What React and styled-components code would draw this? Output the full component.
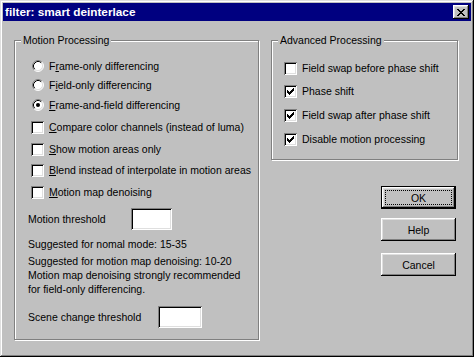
import React from 'react'
import styled, { createGlobalStyle, css } from 'styled-components'

const GlobalStyle = createGlobalStyle`
  html, body {
    margin: 0;
    background: #c0c0c0;
  }
  body {
    font-family: "Liberation Sans", Arial, sans-serif;
    font-size: 10.5px;
    color: #000;
  }
`

const raised = css`
  box-shadow: inset -1px -1px #000, inset 1px 1px #fff, inset -2px -2px #808080, inset 2px 2px #dfdfdf;
`

const sunken = css`
  box-shadow: inset 1px 1px #808080, inset -1px -1px #fff, inset 2px 2px #000, inset -2px -2px #dfdfdf;
`

const Window = styled.div`
  width: 474px;
  height: 357px;
  box-sizing: border-box;
  padding: 3px;
  background: #c0c0c0;
  box-shadow: inset -1px -1px #000, inset 1px 1px #dfdfdf, inset -2px -2px #808080, inset 2px 2px #fff;
  display: flex;
  flex-direction: column;
`

const TitleBar = styled.div`
  height: 18px;
  background: #000080;
  display: flex;
  align-items: center;
  justify-content: space-between;
  padding: 0 2px;
`

const Title = styled.span`
  color: #fff;
  font-weight: bold;
  font-size: 11.8px;
  line-height: 14px;
`

const CloseButton = styled.button`
  width: 16px;
  height: 14px;
  padding: 0 0 0 0;
  border: 0;
  background: #c0c0c0;
  ${raised}
  display: flex;
  align-items: center;
  justify-content: center;
`

const Body = styled.div`
  display: flex;
  gap: 12px;
  padding: 19px 0 0 11px;
`

const Group = styled.div`
  position: relative;
  box-sizing: border-box;
  width: ${p => p.$w}px;
  height: ${p => p.$h}px;
  border: 1px solid #808080;
  box-shadow: 1px 1px 0 #fff, inset 1px 1px 0 #fff;
  padding-left: ${p => p.$pl}px;
  display: flex;
  flex-direction: column;
`

const Legend = styled.span`
  position: absolute;
  top: -7px;
  left: 6px;
  padding: 0 2px;
  background: #c0c0c0;
  line-height: 13px;
  white-space: nowrap;
`

const Option = styled.label`
  display: flex;
  align-items: center;
  gap: 5px;
  height: ${p => p.$h || 13}px;
  margin-top: ${p => p.$mt}px;
  margin-left: ${p => p.$ml || 0}px;
  line-height: 13px;
  white-space: nowrap;
`

const Box = styled.span`
  position: relative;
  width: 13px;
  height: 13px;
  flex: none;
  background: #fff;
  ${sunken}
  svg {
    position: absolute;
    left: 3px;
    top: 3px;
  }
`

const RadioSlot = styled.span`
  width: 13px;
  height: 12px;
  flex: none;
  display: flex;
  justify-content: flex-end;
`

const Field = styled.div`
  display: flex;
  align-items: center;
  height: 22px;
  margin-top: ${p => p.$mt}px;
  white-space: nowrap;
`

const FieldLabel = styled.span`
  width: ${p => p.$w}px;
  flex: none;
`

const TextBox = styled.input`
  width: ${p => p.$w}px;
  height: 22px;
  box-sizing: border-box;
  border: 0;
  padding: 0 3px;
  margin: 0;
  outline: none;
  background: #fff;
  font: inherit;
  ${sunken}
`

const Note = styled.p`
  margin: ${p => p.$mt}px 0 0;
  line-height: ${p => p.$lh || 13}px;
  white-space: nowrap;
`

const Side = styled.div`
  width: 187px;
  display: flex;
  flex-direction: column;
`

const ButtonStack = styled.div`
  display: flex;
  flex-direction: column;
  align-items: flex-end;
  margin-right: 2px;
`

const Button = styled.button`
  position: relative;
  width: 75px;
  height: 23px;
  margin-top: ${p => p.$mt}px;
  border: 0;
  padding: 0;
  background: #c0c0c0;
  font: inherit;
  color: #000;
  ${raised}
  ${p => p.$default && css`
    box-shadow: inset 0 0 0 1px #000, inset -2px -2px #000, inset 2px 2px #fff, inset -3px -3px #808080, inset 3px 3px #dfdfdf;
    &::after {
      content: '';
      position: absolute;
      inset: 4px;
      border: 1px dotted #000;
    }
  `}
`

const Check = () => (
  <svg width="7" height="7" viewBox="0 0 7 7" shapeRendering="crispEdges">
    <path
      fill="#000"
      d="M6 0h1v3h-1zM5 1h1v3h-1zM4 2h1v3h-1zM3 3h1v3h-1zM2 4h1v3h-1zM1 3h1v3h-1zM0 2h1v3h-1z"
    />
  </svg>
)

const Radio = ({ checked }) => (
  <svg width="12" height="12" viewBox="0 0 12 12">
    <circle cx="6" cy="6" r="5" fill="#fff" />
    <path d="M2.11 9.89 A5.5 5.5 0 0 1 9.89 2.11" stroke="#808080" strokeWidth="1" fill="none" />
    <path d="M9.89 2.11 A5.5 5.5 0 0 1 2.11 9.89" stroke="#fff" strokeWidth="1" fill="none" />
    <path d="M2.82 9.18 A4.5 4.5 0 0 1 9.18 2.82" stroke="#000" strokeWidth="1" fill="none" />
    <path d="M9.18 2.82 A4.5 4.5 0 0 1 2.82 9.18" stroke="#dfdfdf" strokeWidth="1" fill="none" />
    {checked && <circle cx="6" cy="6" r="2" fill="#000" />}
  </svg>
)

const CloseGlyph = () => (
  <svg width="8" height="7" viewBox="0 0 8 7" shapeRendering="crispEdges">
    <path
      fill="#000"
      d="M0 0h2v1h-2zM6 0h2v1h-2zM1 1h2v1h-2zM5 1h2v1h-2zM2 2h4v1h-4zM3 3h2v1h-2zM2 4h4v1h-4zM1 5h2v1h-2zM5 5h2v1h-2zM0 6h2v1h-2zM6 6h2v1h-2z"
    />
  </svg>
)

const CheckOption = ({ checked, mt, ml, children }) => (
  <Option $mt={mt} $ml={ml}>
    <Box>{checked && <Check />}</Box>
    <span>{children}</span>
  </Option>
)

const RadioOption = ({ checked, mt, children }) => (
  <Option $mt={mt} $ml={3} $h={12}>
    <RadioSlot><Radio checked={checked} /></RadioSlot>
    <span>{children}</span>
  </Option>
)

export default function App() {
  return (
    <>
      <GlobalStyle />
      <Window>
        <TitleBar>
          <Title>filter: smart deinterlace</Title>
          <CloseButton><CloseGlyph /></CloseButton>
        </TitleBar>
        <Body>
          <Group $w={245} $h={300} $pl={13}>
            <Legend>Motion Processing</Legend>
            <RadioOption mt={19}>F<u>r</u>ame-only differencing</RadioOption>
            <RadioOption mt={7}>F<u>i</u>eld-only differencing</RadioOption>
            <RadioOption mt={8} checked><u>F</u>rame-and-field differencing</RadioOption>
            <CheckOption mt={10} ml={3}><u>C</u>ompare color channels (instead of luma)</CheckOption>
            <CheckOption mt={9} ml={3}><u>S</u>how motion areas only</CheckOption>
            <CheckOption mt={8} ml={3}><u>B</u>lend instead of interpolate in motion areas</CheckOption>
            <CheckOption mt={9} ml={3}><u>M</u>otion map denoising</CheckOption>
            <Field $mt={9}>
              <FieldLabel $w={103}>Motion threshold</FieldLabel>
              <TextBox $w={41} defaultValue="" />
            </Field>
            <Note $mt={8}>Suggested for nomal mode: 15-35</Note>
            <Note $mt={4}>Suggested for motion map denoising: 10-20</Note>
            <Note $mt={0} $lh={14}>
              Motion map denoising strongly recommended<br />
              for field-only differencing.
            </Note>
            <Field $mt={10}>
              <FieldLabel $w={130}>Scene change threshold</FieldLabel>
              <TextBox $w={44} defaultValue="" />
            </Field>
          </Group>
          <Side>
            <Group $w={187} $h={120} $pl={12}>
              <Legend>Advanced Processing</Legend>
              <CheckOption mt={21}>Field swap before phase shift</CheckOption>
              <CheckOption mt={10} checked>Phase shift</CheckOption>
              <CheckOption mt={11} checked>Field swap after phase shift</CheckOption>
              <CheckOption mt={11} checked>Disable motion processing</CheckOption>
            </Group>
            <ButtonStack>
              <Button $default $mt={26}>OK</Button>
              <Button $mt={9}>Help</Button>
              <Button $mt={12}>Cancel</Button>
            </ButtonStack>
          </Side>
        </Body>
      </Window>
    </>
  )
}
